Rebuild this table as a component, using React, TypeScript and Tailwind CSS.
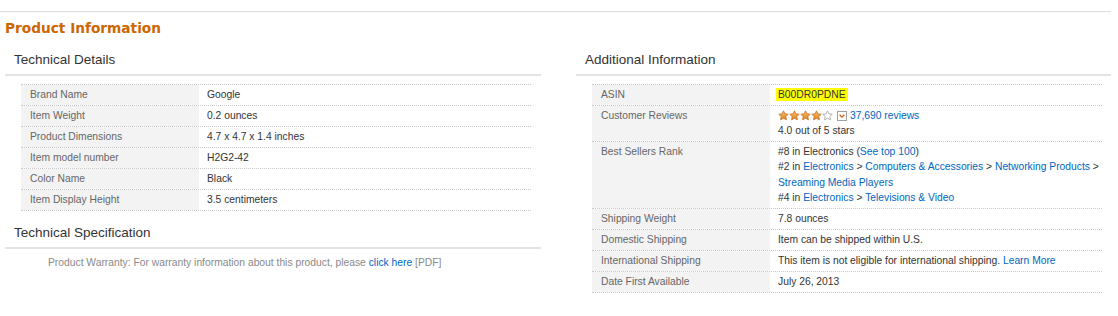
import React from "react";

type Row = { label: string; value: React.ReactNode };

const link = "text-[#0066c0]";

function Star({ filled }: { filled: boolean }) {
  return (
    <svg width="11" height="11" viewBox="0 0 24 24" className="shrink-0">
      <defs>
        <linearGradient id="starfill" x1="0" y1="0" x2="0" y2="1">
          <stop offset="0" stopColor="#f7c27a" />
          <stop offset="1" stopColor="#e0801e" />
        </linearGradient>
      </defs>
      <path
        d="M12 1.8l3.1 6.6 7.2.9-5.3 5 1.4 7.1L12 17.9l-6.4 3.5L7 14.3l-5.3-5 7.2-.9z"
        fill={filled ? "url(#starfill)" : "#fff"}
        stroke={filled ? "#c26a14" : "#9a9a9a"}
        strokeWidth="1.6"
        strokeLinejoin="round"
      />
    </svg>
  );
}

function Chevron() {
  return (
    <svg width="10" height="10" viewBox="0 0 10 10" className="ml-[4px] shrink-0">
      <rect x="0.5" y="0.5" width="9" height="9" fill="#fff" stroke="#a0a0a0" />
      <path d="M2.6 3.8L5 6.2l2.4-2.4" fill="none" stroke="#c26a14" strokeWidth="1.3" />
    </svg>
  );
}

function DetailTable({ rows }: { rows: Row[] }) {
  return (
    <div className="ml-[16px] w-[510px] border-b border-dotted border-[#c8c8c8]">
      {rows.map((r) => (
        <div key={r.label} className="flex border-t border-dotted border-[#c8c8c8] leading-[15px] text-[10.3px]">
          <div className="w-[178px] shrink-0 bg-[#f3f3f3] pl-[9px] pr-[8px] pt-[2px] pb-[3px] text-[#666]">
            {r.label}
          </div>
          <div className="flex-1 px-[8px] pt-[2px] pb-[3px] text-[#333]">{r.value}</div>
        </div>
      ))}
    </div>
  );
}

function SectionHeader({ title, className = "" }: { title: string; className?: string }) {
  return (
    <div className={className}>
      <h3 className="pl-[9px] text-[13.5px] leading-[18px] text-[#333]">{title}</h3>
      <div className="mt-[5px] h-[2px] bg-[#e3e3e3]" />
    </div>
  );
}

export default function App() {
  const technical: Row[] = [
    { label: "Brand Name", value: "Google" },
    { label: "Item Weight", value: "0.2 ounces" },
    { label: "Product Dimensions", value: "4.7 x 4.7 x 1.4 inches" },
    { label: "Item model number", value: "H2G2-42" },
    { label: "Color Name", value: "Black" },
    { label: "Item Display Height", value: "3.5 centimeters" },
  ];

  const additional: Row[] = [
    {
      label: "ASIN",
      value: <span className="-ml-[2px] bg-[#ffff00] px-[2px] py-[1px]">B00DR0PDNE</span>,
    },
    {
      label: "Customer Reviews",
      value: (
        <div>
          <div className="flex items-center">
            <div className="flex">
              <Star filled />
              <Star filled />
              <Star filled />
              <Star filled />
              <Star filled={false} />
            </div>
            <Chevron />
            <span className={`ml-[3px] ${link}`}>37,690 reviews</span>
          </div>
          <div>4.0 out of 5 stars</div>
        </div>
      ),
    },
    {
      label: "Best Sellers Rank",
      value: (
        <div className="whitespace-nowrap leading-[15.3px]">
          <div>
            #8 in Electronics (<span className={link}>See top 100</span>)
          </div>
          <div>
            #2 in <span className={link}>Electronics</span> &gt;{" "}
            <span className={link}>Computers &amp; Accessories</span> &gt;{" "}
            <span className={link}>Networking Products</span> &gt;
          </div>
          <div className={link}>Streaming Media Players</div>
          <div>
            #4 in <span className={link}>Electronics</span> &gt;{" "}
            <span className={link}>Televisions &amp; Video</span>
          </div>
        </div>
      ),
    },
    { label: "Shipping Weight", value: "7.8 ounces" },
    { label: "Domestic Shipping", value: "Item can be shipped within U.S." },
    {
      label: "International Shipping",
      value: (
        <span>
          This item is not eligible for international shipping. <span className={link}>Learn More</span>
        </span>
      ),
    },
    { label: "Date First Available", value: "July 26, 2013" },
  ];

  return (
    <div className="h-[316px] w-[1118px] overflow-hidden bg-white pt-[11px] font-['Liberation_Sans',Arial,sans-serif]">
      <div className="h-px w-[1111px] bg-[#dcdcdc]" />
      <h2 className="mt-[7px] pl-[5px] font-['DejaVu_Sans',Verdana,sans-serif] text-[13.7px] font-bold leading-[18px] text-[#cc6600]">
        Product Information
      </h2>

      <div className="mt-[14px] flex gap-[35px] pl-[5px]">
        {/* LEFT */}
        <div className="w-[536px]">
          <SectionHeader title="Technical Details" />
          <div className="mt-[8px]">
            <DetailTable rows={technical} />
          </div>
          <SectionHeader title="Technical Specification" className="mt-[13px]" />
          <p className="mt-[6px] pl-[43px] text-[10.3px] leading-[15px] text-[#8a8a8a]">
            Product Warranty: For warranty information about this product, please{" "}
            <span className={link}>click here</span> [PDF]
          </p>
        </div>

        {/* RIGHT */}
        <div className="w-[535px]">
          <SectionHeader title="Additional Information" />
          <div className="mt-[8px]">
            <DetailTable rows={additional} />
          </div>
        </div>
      </div>
    </div>
  );
}
